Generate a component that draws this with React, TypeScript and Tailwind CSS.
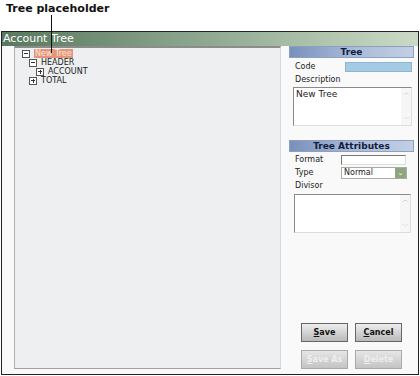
import React from "react";

const font = { fontFamily: '"DejaVu Sans", Verdana, sans-serif' };

function Box({ open }: { open: boolean }) {
  return (
    <span className="inline-flex w-[8px] h-[8px] border border-[#555] bg-white items-center justify-center relative mr-[4px]">
      <span className="absolute w-[4px] h-px bg-[#333]" />
      {!open && <span className="absolute w-px h-[4px] bg-[#333]" />}
    </span>
  );
}

function Node({ indent, open, label, selected }: { indent: number; open: boolean; label: string; selected?: boolean }) {
  return (
    <div className="flex items-center h-[9px]" style={{ paddingLeft: indent }}>
      <Box open={open} />
      <span className={selected ? "bg-[#e4967a] text-[#fbe6dc] px-[1px] leading-[9px]" : "text-[#222] leading-[9px]"}>{label}</span>
    </div>
  );
}

function Header({ title }: { title: string }) {
  return (
    <div className="h-[12px] bg-gradient-to-r from-[#7890bb] via-[#a9bad8] to-[#c2cfe4] border border-[#8da0c2] flex items-center justify-center text-[9px] font-bold text-[#10203a] leading-none">
      {title}
    </div>
  );
}

function TextArea({ text, h }: { text?: string; h: number }) {
  return (
    <div className="flex bg-white border-t border-l border-[#8a8a8a] border-r border-b border-r-[#ddd] border-b-[#ddd]" style={{ height: h }}>
      <div className="flex-1 text-[9px] text-[#222] px-[2px] pt-[2px] leading-none">{text}</div>
      <div className="w-[10px] flex flex-col justify-between items-center py-[2px] bg-[#f6f6f6]">
        <span className="text-[7px] text-[#bbb] leading-none">︿</span>
        <span className="text-[7px] text-[#bbb] leading-none">﹀</span>
      </div>
    </div>
  );
}

function Btn({ label, disabled }: { label: string; disabled?: boolean }) {
  return (
    <div
      className={
        "w-[47px] h-[19px] flex items-center justify-center text-[8px] font-bold border bg-gradient-to-b " +
        (disabled
          ? "border-[#aaa] from-[#e6e6e6] to-[#c4c4c4] text-[#eee]"
          : "border-[#666] from-[#eeeeee] to-[#b9b9b9] text-[#111]")
      }
    >
      <span className="underline">{label[0]}</span>
      {label.slice(1)}
    </div>
  );
}

export default function App() {
  return (
    <div className="w-[420px] h-[376px] bg-white relative" style={font}>
      <div className="h-[31px] pl-[6px] pt-[1px] text-[11px] font-bold text-[#111]">Tree placeholder</div>
      <div className="absolute left-[51px] top-[15px] w-px h-[38px] bg-[#111]" />

      <div className="ml-[1px] w-[418px] h-[344px] border border-[#222] flex flex-col bg-[#f9f9f9]">
        <div className="h-[14px] bg-gradient-to-r from-[#58795f] via-[#90aa92] to-[#cbdac6] text-white text-[11px] leading-[14px] pl-[1px]">
          Account Tree
        </div>
        <div className="flex-1 flex pl-[12px] pr-[4px] pb-[5px]">
          <div className="w-[267px] bg-[#edeff0] border-t-2 border-t-[#8c8c8c] border-l border-l-[#b0b0b0] border-b border-b-[#a89c9c] border-r border-r-[#d8d8d8] pt-[1px] text-[8px]">
            <Node indent={7} open label="New Tree" selected />
            <Node indent={14} open label="HEADER" />
            <Node indent={21} open={false} label="ACCOUNT" />
            <Node indent={14} open={false} label="TOTAL" />
          </div>
          <div className="flex-1 pl-[8px] flex flex-col text-[8px] text-[#222]">
            <Header title="Tree" />
            <div className="flex items-center mt-[4px] pl-[6px] h-[10px]">
              <span className="w-[50px]">Code</span>
              <div className="w-[67px] h-[10px] bg-[#a3cbe3] border border-[#8fb4cc]" />
            </div>
            <div className="pl-[6px] mt-[3px] h-[10px] leading-[10px]">Description</div>
            <div className="pl-[4px] pr-[2px] mt-[2px]">
              <TextArea text="New Tree" h={39} />
            </div>

            <div className="mt-[14px]">
              <Header title="Tree Attributes" />
            </div>
            <div className="flex items-center mt-[2px] pl-[6px] h-[11px]">
              <span className="w-[46px]">Format</span>
              <div className="w-[65px] h-[10px] bg-white border-t border-l border-[#777] border-r border-b border-r-[#ddd] border-b-[#ddd]" />
            </div>
            <div className="flex items-center mt-[2px] pl-[6px] h-[12px]">
              <span className="w-[46px]">Type</span>
              <div className="w-[66px] h-[12px] bg-white border border-[#aaa] flex items-center">
                <span className="flex-1 pl-[2px] text-[8px]">Normal</span>
                <span className="w-[11px] h-[10px] bg-[#8ea67e] text-white text-[7px] flex items-center justify-center leading-none">⌄</span>
              </div>
            </div>
            <div className="pl-[6px] mt-[2px] h-[10px] leading-[10px]">Divisor</div>
            <div className="pl-[5px] pr-[3px] mt-[3px]">
              <TextArea h={39} />
            </div>

            <div className="flex-1" />
            <div className="flex gap-[7px] pl-[12px]">
              <Btn label="Save" />
              <Btn label="Cancel" />
            </div>
            <div className="flex gap-[7px] pl-[12px] mt-[8px]">
              <Btn label="Save As" disabled />
              <Btn label="Delete" disabled />
            </div>
          </div>
        </div>
      </div>
    </div>
  );
}
